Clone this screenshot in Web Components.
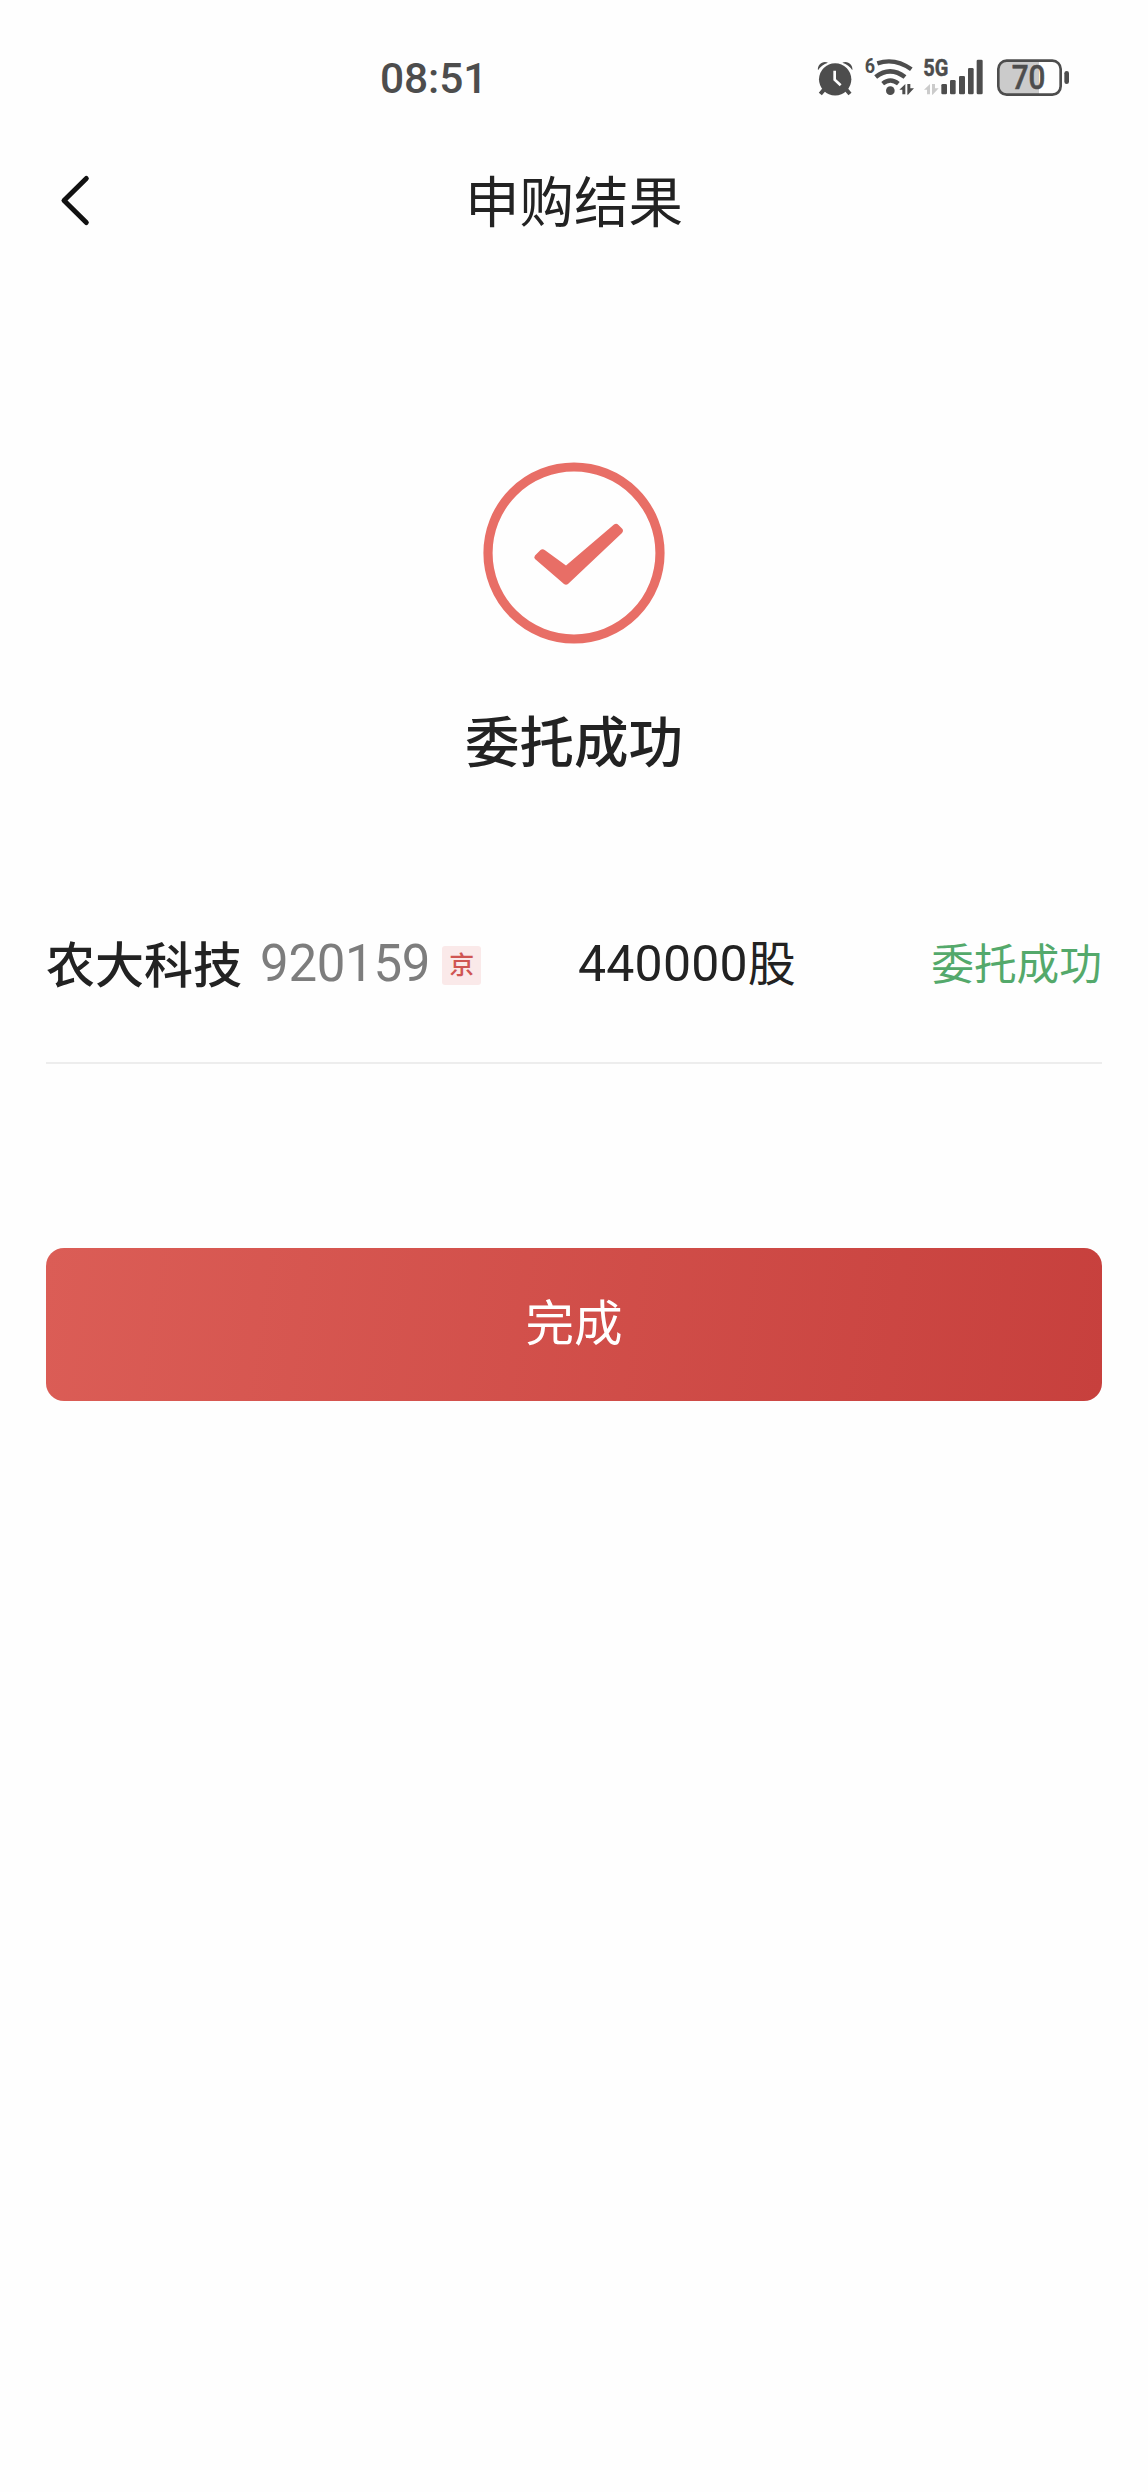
<!DOCTYPE html>
<html lang="zh-CN">
<head>
<meta charset="utf-8">
<title>申购结果</title>
<style>
html,body{margin:0;background:#fefefe}
body{font-family:Roboto,"Noto Sans CJK SC",sans-serif;color:#222}
</style>
</head>
<body>
<result-page></result-page>
<script>
const define = (name, html) => {
  const t = document.createElement('template');
  t.innerHTML = html;
  customElements.define(name, class extends HTMLElement {
    constructor() {
      super();
      this.attachShadow({mode: 'open'}).appendChild(t.content.cloneNode(true));
    }
  });
};

define('status-icons', `
<style>:host{display:block;width:290px;height:65px}svg{display:block}text{font-family:Roboto,sans-serif;fill:#4d4d4d}</style>
<svg width="290" height="65" viewBox="0 0 870 195" fill="#4d4d4d">
  <g>
    <path d="M54 76C51 59 69 45 84 53Q64 59 54 76ZM157 76C160 59 142 45 127 53Q147 59 157 76Z"/>
    <path d="M72 134L61 147M139 134L150 147" stroke="#4d4d4d" stroke-width="12"/>
    <circle cx="105.500" cy="103" r="48.500"/>
    <path d="M104 77V104L122 121" fill="none" stroke="#fefefe" stroke-width="8"/>
  </g>
  <text x="194" y="84" font-size="63" font-weight="700" textLength="31" lengthAdjust="spacingAndGlyphs">6</text>
  <g fill="none" stroke="#4d4d4d" stroke-width="13">
    <path d="M232 55Q285 37 334 73"/>
    <path d="M227 96Q270 62 315 96" stroke-width="14"/>
    <path d="M248 116Q271 97 295 116" stroke-width="13"/>
  </g>
  <circle cx="271" cy="137" r="13"/>
  <path d="M298 134L316 117V148H307V134ZM322 117H331V130H342L324 149H322Z"/>
  <path d="M372 134L390 117V148H381V134ZM396 117H405V130H416L398 149H396Z" fill="#cbcbcb"/>
  <text x="370" y="94" font-size="70" font-weight="700" textLength="75" lengthAdjust="spacingAndGlyphs" stroke="#4d4d4d" stroke-width="1.500">5G</text>
  <rect x="424" y="117" width="17" height="31" rx="4"/>
  <rect x="450" y="105" width="17" height="43" rx="4"/>
  <rect x="477" y="93" width="18" height="55" rx="4"/>
  <rect x="504" y="69" width="17" height="79" rx="4"/>
  <rect x="530" y="44" width="18" height="104" rx="4"/>
  <path d="M621 49H717V147H621Q598 147 598 124V72Q598 49 621 49Z" fill="#cbcbcb"/>
  <rect x="595" y="47" width="187" height="102" rx="25" fill="none" stroke="#4d4d4d" stroke-width="8"/>
  <rect x="793" y="78" width="14" height="39" rx="7"/>
  <text x="635" y="131" font-size="97" font-weight="500" textLength="101" lengthAdjust="spacingAndGlyphs" stroke="#4d4d4d" stroke-width="1.500">70</text>
</svg>`);

define('status-bar', `
<style>
:host{display:flex;height:140px;box-sizing:border-box;padding:45px 58px 0 380px;justify-content:space-between}
.time{font:500 42.5px/67px Roboto,sans-serif;letter-spacing:-.1px;color:#4d4d4d}
</style>
<span class="time">08:51</span><status-icons></status-icons>`);

define('nav-header', `
<style>
:host{display:grid;grid-template-columns:100px 1fr 100px;height:124px;align-items:center;padding:0 46px}
h1{margin:2px 0 0;text-align:center;font-size:54.500px;font-weight:400;line-height:80px}
svg{display:block}
</style>
<svg width="60" height="60" viewBox="0 0 60 60"><path d="M40.300 6.500L18 28.500L40.300 50.500" fill="none" stroke="#111" stroke-width="5" stroke-linecap="round" stroke-linejoin="round"/></svg>
<h1><slot></slot></h1>`);

define('success-hero', `
<style>
:host{display:flex;flex-direction:column;align-items:center;padding-top:198px}
svg{display:block}
h2{margin:59px 0 -1px;font-size:54.500px;font-weight:500;line-height:80px}
</style>
<svg width="182" height="182" viewBox="0 0 182 182"><circle cx="91" cy="91" r="86" fill="none" stroke="#e86e66" stroke-width="9.200"/>
<path transform="translate(0 9)" d="M52 84.500L57.500 79Q59.500 77.500 62 79.200L83 94.500L131 53.500Q133.500 52 135.500 54L139 57.500Q141 59.500 139 62L85 113Q83 114.500 81 113L52 88Q50.500 86.500 52 84.500Z" fill="#e86e66"/></svg>
<h2><slot></slot></h2>`);

define('market-tag', `
<style>:host{display:block;width:39px;height:39px;border-radius:3px;background:#fae9e9;color:#cf5552;font-size:25px;font-weight:500;line-height:39px;text-align:center}</style>
<slot></slot>`);

define('order-row', `
<style>
:host{display:grid;grid-template-columns:532px 1fr auto;align-items:center;margin:120px 46px 0;height:162px;padding-bottom:36px;box-sizing:border-box;border-bottom:2px solid #ededed;line-height:72px}
.stock{display:flex;align-items:center}
.name{font-size:49px;font-weight:500;padding-top:5px;margin-bottom:-1px}
.code{margin-left:18px;font-size:51px;color:#7d7d7d;letter-spacing:-.3px}
market-tag{margin-left:12px;margin-top:3px}
.qty{font-size:50px;letter-spacing:.2px;padding-top:1px}
.qty small{font-size:48px;letter-spacing:0}
.state{font-size:42.700px;color:#54a96b;padding-top:2px}
</style>
<div class="stock"><span class="name"><slot name="name"></slot></span><span class="code"><slot name="code"></slot></span><market-tag>京</market-tag></div>
<div class="qty"><slot name="qty"></slot><small>股</small></div>
<div class="state"><slot name="state"></slot></div>`);

define('primary-button', `
<style>
:host{display:block;margin:184px 46px 0}
button{display:block;width:100%;height:153px;border:0;border-radius:18px;padding:0;background:linear-gradient(98deg,#db5d56,#c7403d);color:#fff;font:400 48.500px/150px Roboto,"Noto Sans CJK SC",sans-serif}
</style>
<button><slot></slot></button>`);

define('result-page', `
<style>:host{display:flex;flex-direction:column;width:1148px;height:2492px;overflow:hidden}</style>
<status-bar></status-bar>
<nav-header>申购结果</nav-header>
<success-hero>委托成功</success-hero>
<order-row><span slot="name">农大科技</span><span slot="code">920159</span><span slot="qty">440000</span><span slot="state">委托成功</span></order-row>
<primary-button>完成</primary-button>`);
</script>
</body>
</html>
